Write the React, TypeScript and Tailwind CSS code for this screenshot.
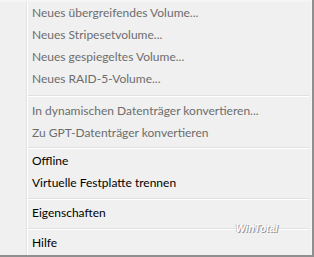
import React from "react";

type Item = { kind: "item"; label: string; disabled?: boolean } | { kind: "sep"; h: number; off: number };

const items: Item[] = [
  { kind: "item", label: "Neues übergreifendes Volume...", disabled: true },
  { kind: "item", label: "Neues Stripesetvolume...", disabled: true },
  { kind: "item", label: "Neues gespiegeltes Volume...", disabled: true },
  { kind: "item", label: "Neues RAID-5-Volume...", disabled: true },
  { kind: "sep", h: 10, off: 5 },
  { kind: "item", label: "In dynamischen Datenträger konvertieren...", disabled: true },
  { kind: "item", label: "Zu GPT-Datenträger konvertieren", disabled: true },
  { kind: "sep", h: 6, off: 3 },
  { kind: "item", label: "Offline" },
  { kind: "item", label: "Virtuelle Festplatte trennen" },
  { kind: "sep", h: 8, off: 4 },
  { kind: "item", label: "Eigenschaften" },
  { kind: "sep", h: 8, off: 4 },
  { kind: "item", label: "Hilfe" },
];

function Sep({ h, off }: { h: number; off: number }) {
  return (
    <div className="flex flex-col pl-[28px] pr-[2px]" style={{ height: h, paddingTop: off }}>
      <div className="h-px bg-[#e0e0e0]" />
      <div className="h-px bg-white" />
    </div>
  );
}

export default function App() {
  return (
    <div
      className="relative w-[314px] h-[257px] overflow-hidden bg-[#f5f5f5] border-r-2 border-b-2 border-[#8f8f8f] box-border"
      style={{ fontFamily: '"Segoe UI", Lato, "Open Sans", sans-serif' }}
    >
      <div className="relative h-full mt-[2px] mr-[1px] bg-[#f0f0f0]">
        <div className="absolute top-0 bottom-0 left-[26px] w-px bg-[#e2e3e3]" />
        <div className="absolute top-0 bottom-0 left-[27px] w-px bg-white" />
        <div className="relative flex flex-col">
          {items.map((it, i) =>
            it.kind === "sep" ? (
              <Sep key={i} h={it.h} off={it.off} />
            ) : (
              <div
                key={i}
                className={
                  "h-[22px] pl-[32px] text-[12px] leading-[22px] whitespace-nowrap " +
                  (it.disabled ? "text-[#6d6d6d]" : "text-black")
                }
              >
                {it.label}
              </div>
            )
          )}
        </div>
        <div
          className="absolute left-[236px] top-[222px] text-[10px] leading-[10px] font-bold italic text-white"
          style={{ fontFamily: '"Liberation Sans", Arial, sans-serif', textShadow: "1px 1px 0 #9a9a9a, -1px 0 0 #c8c8c8" }}
        >
          WinTotal
        </div>
      </div>
    </div>
  );
}
